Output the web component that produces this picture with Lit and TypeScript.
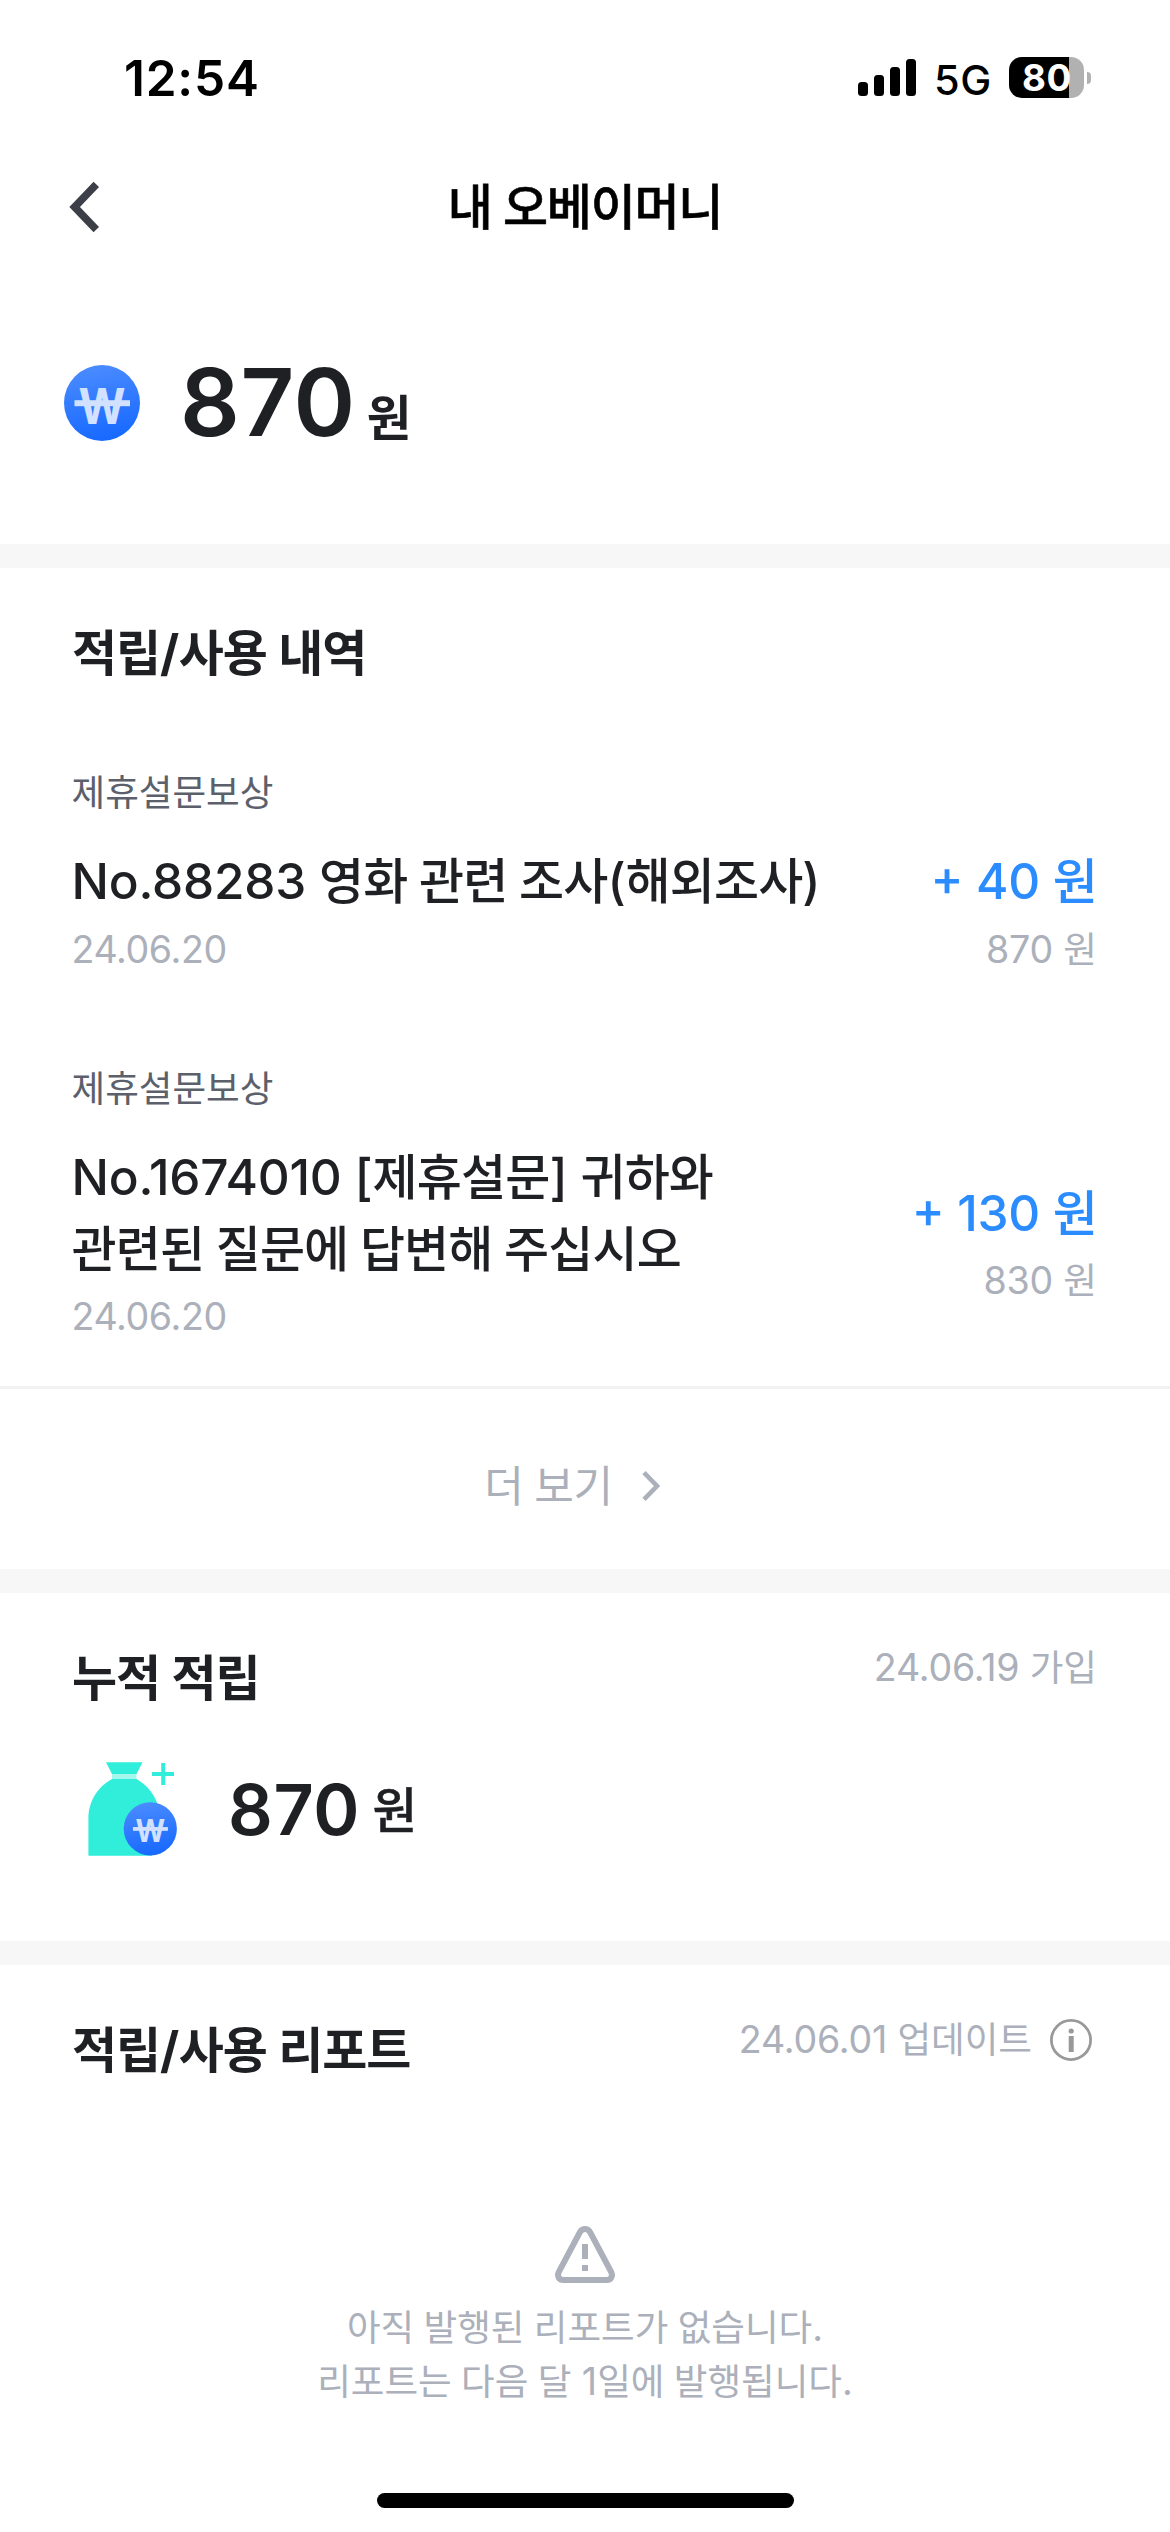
import { LitElement, html, svg, css } from "lit";
import { customElement } from "lit/decorators.js";

interface Entry {
  category: string;
  title: string[];
  date: string;
  amount: string;
  balance: string;
}

const entries: Entry[] = [
  {
    category: "제휴설문보상",
    title: ["No.88283 영화 관련 조사(해외조사)"],
    date: "24.06.20",
    amount: "+ 40 원",
    balance: "870 원",
  },
  {
    category: "제휴설문보상",
    title: ["No.1674010 [제휴설문] 귀하와", "관련된 질문에 답변해 주십시오"],
    date: "24.06.20",
    amount: "+ 130 원",
    balance: "830 원",
  },
];

// Hangul runs get their own span so their size and spacing can be tuned against the Latin digits.
const HANGUL = /([\uac00-\ud7a3]+(?: [\uac00-\ud7a3]+)*)/;
const t = (text: string) =>
  text.split(HANGUL).map((part, i) => (i % 2 ? html`<span class="ko">${part}</span>` : part));

// Won coin centred on the origin; glyph is the scale of the symbol inside.
const coin = (id: string, r: number, glyph: number) => svg`
  <defs>
    <linearGradient id=${id} x1="0.4" y1="0" x2="0.6" y2="1">
      <stop offset="0" stop-color="#4a8bff" />
      <stop offset="1" stop-color="#1668ff" />
    </linearGradient>
  </defs>
  <circle r=${r} fill="url(#${id})" />
  <g transform="scale(${glyph})" fill="#d1e1ff">
    <text class="won" x="-23.5" y="21.2" textLength="47" lengthAdjust="spacingAndGlyphs">W</text>
    <rect x="-27.5" y="-2.8" width="55.5" height="6" />
  </g>`;

@customElement("app-root")
export class AppRoot extends LitElement {
  static styles = css`
    :host {
      display: flex;
      flex-direction: column;
      box-sizing: border-box;
      width: 1170px;
      height: 2532px;
      overflow: hidden;
      background: #fff;
      color: #1f2024;
      font-family: Inter, "Noto Sans CJK KR", sans-serif;
      font-size: 49.5px;
      white-space: nowrap;
    }
    svg {
      display: block;
      flex: none;
    }
    .ko {
      font-family: "Noto Sans CJK KR", sans-serif;
      font-size: 0.99em;
      line-height: 0;
      letter-spacing: -0.018em;
      word-spacing: 0.03em;
    }
    .won {
      font: 700 49.5px Inter, sans-serif;
    }
    .status {
      display: flex;
      align-items: center;
      justify-content: space-between;
      height: 156px;
      padding: 0 79px 0 124px;
      color: #000;
    }
    .time {
      font-weight: 600;
      letter-spacing: 0.8px;
    }
    .indicators {
      display: flex;
      align-items: center;
    }
    .signal {
      margin-bottom: 1px;
    }
    .network {
      font-size: 41.5px;
      font-weight: 450;
      letter-spacing: 0.6px;
      margin: 3px 17px 0 18px;
    }
    .battery {
      display: flex;
      align-items: center;
      justify-content: center;
      box-sizing: border-box;
      width: 75px;
      height: 41px;
      padding-left: 1px;
      margin-top: -1px;
      border-radius: 13px;
      background: linear-gradient(90deg, #000 60px, #b1b1b1 60px);
      color: #fff;
      font-size: 36.8px;
      font-weight: 700;
      letter-spacing: 0.6px;
      line-height: 41px;
    }
    .nub {
      width: 4px;
      height: 12px;
      margin: -1px 0 0 3px;
      border-radius: 0 4px 4px 0;
      background: #b1b1b1;
    }
    .nav {
      display: grid;
      grid-template-columns: 1fr auto 1fr;
      align-items: center;
      height: 101px;
      color: #000;
    }
    .back {
      margin-left: 69px;
    }
    .nav-title {
      font-weight: 500;
      line-height: 72px;
      -webkit-text-stroke: 0.6px #000;
    }
    .nav-title .ko {
      letter-spacing: -0.025em;
    }
    .balance {
      display: flex;
      align-items: center;
      box-sizing: border-box;
      height: 287px;
      padding: 5px 0 0 64px;
      gap: 40px;
    }
    .big {
      font-size: 93.5px;
      font-weight: 600;
      line-height: 100px;
      letter-spacing: 0.6px;
      margin-top: -2px;
    }
    .unit {
      font-size: 48.5px;
      font-weight: 700;
      line-height: 0;
      margin-left: 11px;
    }
    .gap {
      height: 24px;
      flex: none;
      background: #f7f7f7;
    }
    .head {
      display: flex;
      justify-content: space-between;
      align-items: flex-start;
      height: 75px;
      padding: 48px 73px 0 72px;
    }
    .heading {
      margin: 0;
      font-size: 49.5px;
      font-weight: 700;
      line-height: 75px;
      letter-spacing: -0.5px;
    }
    .heading .ko {
      letter-spacing: -0.022em;
    }
    .meta,
    .date,
    .after {
      color: #abb0ba;
      font-size: 37.6px;
      line-height: 54px;
      letter-spacing: -0.2px;
    }
    .date {
      letter-spacing: -0.4px;
    }
    .meta {
      display: flex;
      align-items: center;
      gap: 18px;
    }
    .meta .ko,
    .after .ko,
    .category .ko,
    .empty .ko {
      font-size: 36.6px;
      letter-spacing: 0;
    }
    .info {
      margin-right: 5px;
    }
    .entries {
      display: flex;
      flex-direction: column;
      gap: 85px;
      margin-top: 75px;
      padding: 0 73px 0 71.5px;
    }
    .category {
      color: #5b606b;
      font-size: 37.6px;
      line-height: 54px;
    }
    .row {
      display: flex;
      align-items: center;
      justify-content: space-between;
      margin-top: 25px;
    }
    .name,
    .amount {
      font-weight: 500;
      line-height: 72px;
      letter-spacing: -0.2px;
      margin-bottom: 5.5px;
    }
    .side {
      text-align: right;
    }
    .amount {
      color: #2a8cff;
      letter-spacing: -0.3px;
      font-feature-settings: "case" 1;
    }
    .more {
      display: flex;
      align-items: center;
      justify-content: center;
      gap: 29px;
      box-sizing: border-box;
      height: 183px;
      margin-top: 42px;
      padding: 13px 24px 0 0;
      border-top: 3px solid #f2f2f3;
      color: #abb0ba;
      font-size: 43px;
      line-height: 60px;
    }
    .more .ko {
      font-size: 43px;
      letter-spacing: -0.3px;
    }
    .total {
      display: flex;
      align-items: center;
      gap: 36px;
      height: 101px;
      margin: 43px 0 81px;
      padding-left: 72px;
    }
    .mid {
      font-size: 70px;
      font-weight: 600;
      line-height: 100px;
      letter-spacing: 0.6px;
    }
    .mid .unit {
      font-weight: 500;
      margin-left: 12.5px;
      vertical-align: 7px;
      -webkit-text-stroke: 0.5px #1f2024;
    }
    .empty {
      display: flex;
      flex-direction: column;
      align-items: center;
      margin-top: 138px;
      color: #abb0ba;
      font-size: 37.6px;
      line-height: 54px;
    }
    .empty svg {
      margin-bottom: 18px;
    }
    .home {
      width: 417px;
      height: 15px;
      flex: none;
      margin: auto auto 24px;
      border-radius: 8px;
      background: #000;
    }
  `;

  private entry(e: Entry) {
    return html`
      <article>
        <div class="category">${t(e.category)}</div>
        <div class="row">
          <div>
            <div class="name">${e.title.map((line) => html`<div>${t(line)}</div>`)}</div>
            <div class="date">${e.date}</div>
          </div>
          <div class="side">
            <div class="amount">${t(e.amount)}</div>
            <div class="after">${t(e.balance)}</div>
          </div>
        </div>
      </article>
    `;
  }

  render() {
    return html`
      <div class="status">
        <div class="time">12:54</div>
        <div class="indicators">
          <svg class="signal" width="58" height="37" viewBox="0 0 58 37">
            <rect x="0" y="23" width="10" height="14" rx="3.5" />
            <rect x="16" y="16" width="10" height="21" rx="3.5" />
            <rect x="32" y="8" width="10" height="29" rx="3.5" />
            <rect x="48" y="0" width="10" height="37" rx="3.5" />
          </svg>
          <div class="network">5G</div>
          <div class="battery">80</div>
          <div class="nub"></div>
        </div>
      </div>

      <nav class="nav">
        <svg class="back" width="31" height="52" viewBox="0 0 31 52" fill="none" stroke="#3c3f47" stroke-width="7.6">
          <path d="M27.3 3.3 L5.6 26 L27.3 48.7" />
        </svg>
        <div class="nav-title">${t("내 오베이머니")}</div>
      </nav>

      <section class="balance">
        <svg width="76" height="76" viewBox="-38 -38 76 76">${coin("coin-large", 38, 1)}</svg>
        <div class="big">870<span class="ko unit">원</span></div>
      </section>

      <div class="gap"></div>

      <section>
        <header class="head"><h2 class="heading">${t("적립/사용 내역")}</h2></header>
        <div class="entries">${entries.map((e) => this.entry(e))}</div>
        <div class="more">
          <div>${t("더 보기")}</div>
          <svg width="20" height="32" viewBox="0 0 20 32" fill="none" stroke="#abb0ba" stroke-width="4.6">
            <path d="M2 2.6 L15 16 L2 29.4" />
          </svg>
        </div>
      </section>

      <div class="gap"></div>

      <section>
        <header class="head">
          <h2 class="heading">${t("누적 적립")}</h2>
          <div class="meta"><div>${t("24.06.19 가입")}</div></div>
        </header>
        <div class="total">
          <svg width="120" height="101" viewBox="0 0 120 101">
            <g fill="#30eed9">
              <path d="M34 3.3 H70.5 L64.5 15 H40 Z" />
              <path d="M40 20 H64.5 C77 27 88 41 88 60 L80 80 V96.7 H16.4 V60 C16.4 41 27 27 40 20 Z" />
              <rect x="89.2" y="4" width="4" height="22" />
              <rect x="80" y="13" width="22" height="4" />
            </g>
            <rect x="40" y="15" width="24.5" height="5" fill="#a3f7ec" />
            <g transform="translate(78.3 69.8)">${coin("coin-small", 26.6, 0.63)}</g>
          </svg>
          <div class="mid">870<span class="ko unit">원</span></div>
        </div>
      </section>

      <div class="gap"></div>

      <section>
        <header class="head">
          <h2 class="heading">${t("적립/사용 리포트")}</h2>
          <div class="meta">
            <div>${t("24.06.01 업데이트")}</div>
            <svg class="info" width="42" height="42" viewBox="0 0 42 42">
              <circle cx="21" cy="21" r="19.6" fill="none" stroke="#999" stroke-width="2.8" />
              <circle cx="21.2" cy="12" r="2.6" fill="#999" />
              <rect x="18.7" y="17" width="5" height="16" fill="#999" />
            </svg>
          </div>
        </header>
        <div class="empty">
          <svg width="60" height="57" viewBox="0 0 60 57" fill="none" stroke="#abb0ba" stroke-width="6">
            <path
              d="M24.8 6.4 L4 45.6 C1.6 50.4 4.2 54 8.6 54 H51.4 C55.8 54 58.4 50.4 56 45.6 L35.2 6.4 C32.8 1.9 27.2 1.9 24.8 6.4 Z"
            />
            <path d="M30 18 V33 M30 39 V45" />
          </svg>
          <div>${t("아직 발행된 리포트가 없습니다.")}</div>
          <div>${t("리포트는 다음 달 1일에 발행됩니다.")}</div>
        </div>
      </section>

      <div class="home"></div>
    `;
  }
}
